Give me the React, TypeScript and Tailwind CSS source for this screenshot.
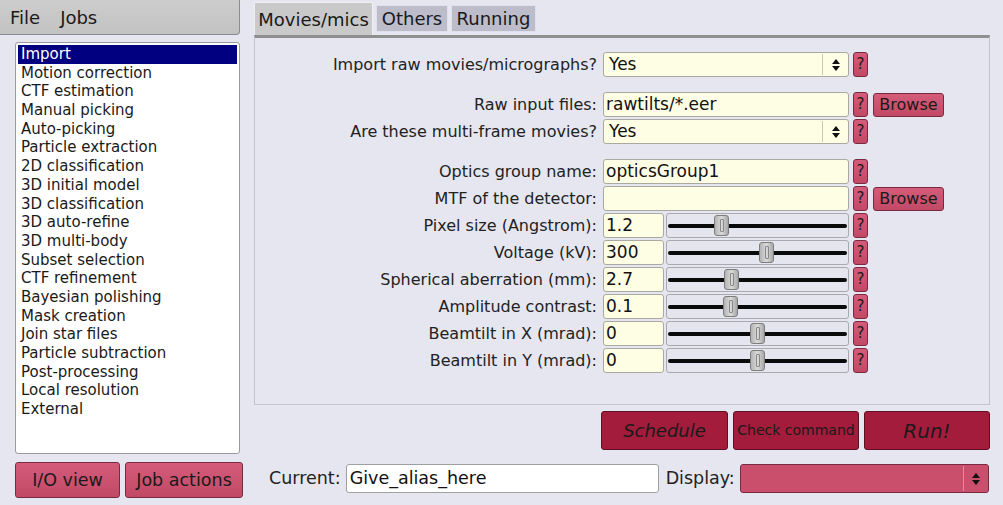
import React from "react";

const jobs = [
  "Import",
  "Motion correction",
  "CTF estimation",
  "Manual picking",
  "Auto-picking",
  "Particle extraction",
  "2D classification",
  "3D initial model",
  "3D classification",
  "3D auto-refine",
  "3D multi-body",
  "Subset selection",
  "CTF refinement",
  "Bayesian polishing",
  "Mask creation",
  "Join star files",
  "Particle subtraction",
  "Post-processing",
  "Local resolution",
  "External",
];

function Help() {
  return (
    <div className="w-[15px] h-[25px] ml-[4px] shrink-0 rounded-[3px] border border-[#7a2a40] bg-gradient-to-b from-[#d45c7a] to-[#c24966] flex items-center justify-center text-[15px] text-[#1a1a1a]">
      ?
    </div>
  );
}

function Browse() {
  return (
    <div className="ml-[5px] w-[71px] h-[24px] rounded-[3px] border border-[#7a2a40] bg-gradient-to-b from-[#d45c7a] to-[#c24966] flex items-center justify-center text-[16px] text-[#1a1a1a]">
      Browse
    </div>
  );
}

function Arrows() {
  return (
    <svg width="10" height="14" viewBox="0 0 10 14">
      <path d="M5 1 L9 6 L1 6 Z" fill="#111" />
      <path d="M5 13 L9 8 L1 8 Z" fill="#111" />
    </svg>
  );
}

function Label({ text }: { text: string }) {
  return (
    <div className="w-[348px] pr-[6px] text-right text-[16px] text-[#222] whitespace-nowrap">{text}</div>
  );
}

function SelectRow({ label }: { label: string }) {
  return (
    <div className="flex items-center h-[25px]">
      <Label text={label} />
      <div className="w-[246px] h-[25px] rounded-[3px] border border-[#a9a9a0] bg-[#fefee4] flex items-center">
        <div className="flex-1 pl-[5px] text-[17px] text-[#111]">Yes</div>
        <div className="w-[26px] h-[21px] border-l border-[#c8c8b8] flex items-center justify-center">
          <Arrows />
        </div>
      </div>
      <Help />
    </div>
  );
}

function TextRow({ label, value, browse }: { label: string; value: string; browse?: boolean }) {
  return (
    <div className="flex items-center h-[25px]">
      <Label text={label} />
      <div className="w-[246px] h-[25px] rounded-[3px] border border-[#a9a9a0] bg-[#fefee4] flex items-center pl-[2px] text-[17px] text-[#111]">
        {value}
      </div>
      <Help />
      {browse && <Browse />}
    </div>
  );
}

function SliderRow({ label, value, pos }: { label: string; value: string; pos: number }) {
  return (
    <div className="flex items-center h-[25px]">
      <Label text={label} />
      <div className="w-[61px] h-[25px] rounded-[3px] border border-[#a9a9a0] bg-[#fefee4] flex items-center pl-[2px] text-[17px] text-[#111]">
        {value}
      </div>
      <div className="relative ml-[2px] w-[183px] h-[25px] rounded-[3px] border border-[#a9a9b0] bg-[#e5e5ef]">
        <div className="absolute left-[1px] right-[1px] top-[10px] h-[4px] bg-[#0a0a0a] rounded-full" />
        <div
          className="absolute top-[1px] w-[15px] h-[21px] rounded-[3px] border border-[#7d7d7d] bg-gradient-to-r from-[#b4b4b4] via-[#dadada] to-[#a8a8a8] flex justify-center"
          style={{ left: pos - 7 }}
        >
          <div className="mt-[3px] w-[4px] h-[13px] border border-[#888] rounded-[1px]" />
        </div>
      </div>
      <Help />
    </div>
  );
}

export default function App() {
  return (
    <div
      className="relative w-[1003px] h-[505px] overflow-hidden bg-[#e6e6f0] flex"
      style={{ fontFamily: '"DejaVu Sans", sans-serif' }}
    >
      {/* Left column */}
      <div className="w-[254px] shrink-0 flex flex-col">
        <div className="w-[240px] h-[35px] bg-gradient-to-b from-[#cdcdcd] to-[#c2c2c2] border-r border-b border-[#8c8c8c] rounded-br-[4px] flex items-center text-[18px] text-[#1a1a1a]">
          <span className="ml-[10px]">File</span>
          <span className="ml-[20px]">Jobs</span>
        </div>
        <div className="ml-[15px] mt-[7px] w-[225px] h-[412px] rounded-[3px] border border-[#9a9aa0] bg-white p-[2px] text-[15px] text-[#1a1a1a]">
          {jobs.map((j, i) => (
            <div
              key={j}
              className={
                "h-[18.7px] leading-[18.7px] pl-[3px] whitespace-nowrap " +
                (i === 0 ? "bg-[#000080] text-white" : "")
              }
            >
              {j}
            </div>
          ))}
        </div>
        <div className="ml-[15px] mt-[8px] flex gap-[5px]">
          <div className="w-[105px] h-[36px] rounded-[3px] border border-[#7a2a40] bg-gradient-to-b from-[#d45c7a] to-[#c24966] flex items-center justify-center text-[17.5px] text-[#1a1a1a]">
            I/O view
          </div>
          <div className="w-[118px] h-[36px] rounded-[3px] border border-[#7a2a40] bg-gradient-to-b from-[#d45c7a] to-[#c24966] flex items-center justify-center text-[17.5px] text-[#1a1a1a]">
            Job actions
          </div>
        </div>
      </div>

      {/* Right column */}
      <div className="w-[736px] shrink-0 flex flex-col">
        <div className="h-[35px] flex items-end gap-[3px]">
          <div className="w-[119px] h-[33px] bg-[#c9c9c9] border-l border-t border-r border-[#f0f0f0] rounded-t-[2px] flex items-center justify-center text-[18px] text-[#1a1a1a]">
            Movies/mics
          </div>
          <div className="w-[72px] h-[27px] mb-[3px] bg-[#bcbccb] border border-[#e0e0ea] flex items-center justify-center text-[18px] text-[#1a1a1a]">
            Others
          </div>
          <div className="w-[85px] h-[27px] mb-[3px] bg-[#bcbccb] border border-[#e0e0ea] flex items-center justify-center text-[18px] text-[#1a1a1a]">
            Running
          </div>
        </div>
        <div className="h-[370px] border-t-[3px] border-t-[#8f8f8f] border-x border-b border-[#c4c4cc] pt-[14px] flex flex-col">
          <SelectRow label="Import raw movies/micrographs?" />
          <div className="h-[15px]" />
          <TextRow label="Raw input files:" value="rawtilts/*.eer" browse />
          <div className="h-[2px]" />
          <SelectRow label="Are these multi-frame movies?" />
          <div className="h-[15px]" />
          <div className="flex flex-col gap-[2px]">
            <TextRow label="Optics group name:" value="opticsGroup1" />
            <TextRow label="MTF of the detector:" value="" browse />
            <SliderRow label="Pixel size (Angstrom):" value="1.2" pos={54} />
            <SliderRow label="Voltage (kV):" value="300" pos={99} />
            <SliderRow label="Spherical aberration (mm):" value="2.7" pos={64} />
            <SliderRow label="Amplitude contrast:" value="0.1" pos={63} />
            <SliderRow label="Beamtilt in X (mrad):" value="0" pos={90} />
            <SliderRow label="Beamtilt in Y (mrad):" value="0" pos={90} />
          </div>
        </div>
        <div className="mt-[6px] flex justify-end gap-[5px]">
          <div className="w-[127px] h-[39px] rounded-[3px] border border-[#5e0f22] bg-[#a31c3b] flex items-center justify-center text-[18px] italic text-[#1a1a1a]">
            Schedule
          </div>
          <div className="w-[126px] h-[39px] rounded-[3px] border border-[#5e0f22] bg-[#a31c3b] flex items-center justify-center text-[14px] text-[#1a1a1a]">
            Check command
          </div>
          <div className="w-[126px] h-[39px] rounded-[3px] border border-[#5e0f22] bg-[#a31c3b] flex items-center justify-center text-[20px] italic text-[#1a1a1a]">
            Run!
          </div>
        </div>
        <div className="mt-[14px] flex items-center h-[29px]">
          <span className="ml-[15px] text-[17.5px] text-[#222]">Current:</span>
          <div className="ml-[5px] w-[313px] h-[29px] rounded-[3px] border border-[#a0a0a0] bg-white flex items-center pl-[3px] text-[17.5px] text-[#111]">
            Give_alias_here
          </div>
          <span className="ml-[7px] text-[17.5px] text-[#222]">Display:</span>
          <div className="ml-[5px] flex-1 mr-[1px] h-[29px] rounded-[3px] border border-[#7a2a40] bg-[#c94f6c] flex items-center justify-end">
            <div className="w-[25px] h-[25px] border-l border-[#e08ba0] flex items-center justify-center">
              <Arrows />
            </div>
          </div>
        </div>
      </div>
    </div>
  );
}
